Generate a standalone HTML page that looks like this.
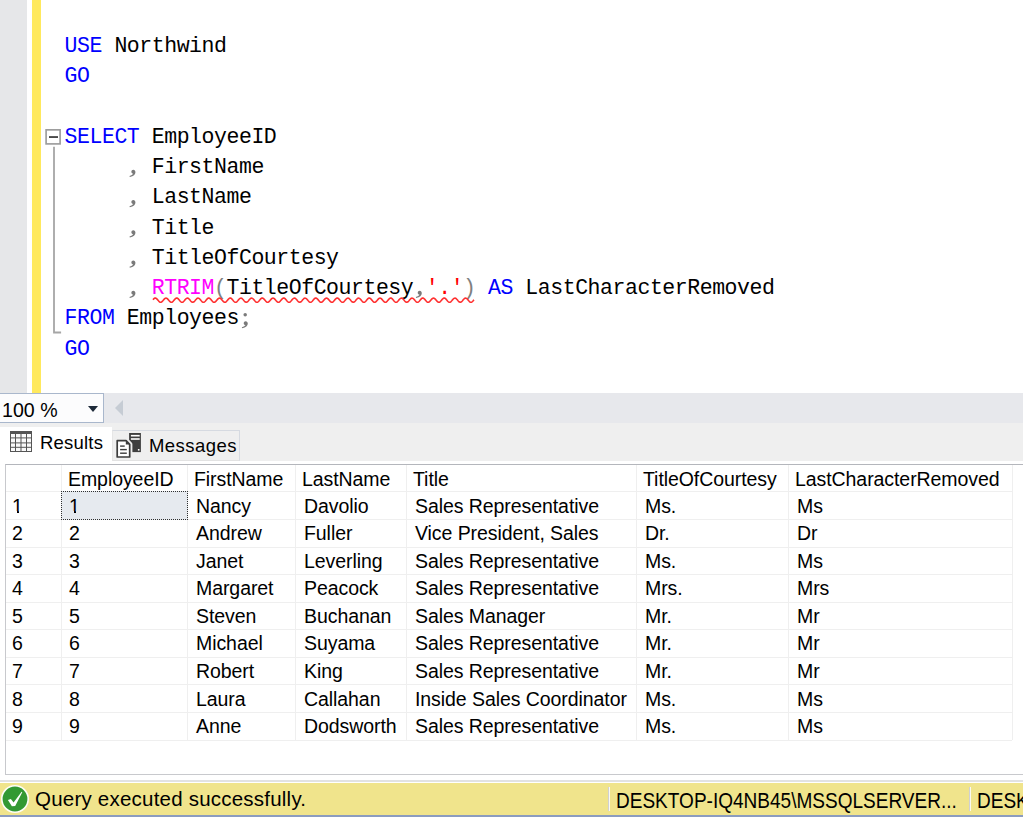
<!DOCTYPE html>
<html><head><meta charset="utf-8">
<style>
*{margin:0;padding:0;box-sizing:border-box}
html,body{width:1023px;height:817px;overflow:hidden;background:#f0f0f0;position:relative}
.abs{position:absolute}
.code{position:absolute;left:64.6px;font-family:"Liberation Mono",monospace;font-size:21.5px;letter-spacing:-0.45px;white-space:pre;color:#000;line-height:30.27px}
.kw{color:#0000ff}.gr{color:#808080}.cm{color:transparent}.fn{color:#ff00ff}.st{color:#ff0000}
.ui{position:absolute;font-family:"Liberation Sans",sans-serif;white-space:pre;color:#000}
.gl{position:absolute;background:#efefef}
.cell{position:absolute;font-family:"Liberation Sans",sans-serif;font-size:19.5px;letter-spacing:-0.07px;white-space:pre;color:#000;line-height:20px}
</style></head><body>
<div class="abs" style="left:0;top:0;width:1023px;height:393px;background:#fff"></div>
<div class="abs" style="left:0;top:0;width:27px;height:393px;background:#e6e7e9"></div>
<div class="abs" style="left:32px;top:0;width:9px;height:393px;background:#ffe95d"></div>
<div class="code" style="top:31.0px"><span class="kw">USE</span> Northwind
<span class="kw">GO</span>

<span class="kw">SELECT</span> EmployeeID
     <span class="cm">,</span> FirstName
     <span class="cm">,</span> LastName
     <span class="cm">,</span> Title
     <span class="cm">,</span> TitleOfCourtesy
     <span class="cm">,</span> <span class="fn">RTRIM</span><span class="gr">(</span>TitleOfCourtesy<span class="cm">,</span><span class="st">'.'</span><span class="gr">)</span> <span class="kw">AS</span> LastCharacterRemoved
<span class="kw">FROM</span> Employees<span class="cm">;</span>
<span class="kw">GO</span></div>
<svg class="abs" style="left:40px;top:120px" width="30" height="220" viewBox="40 120 30 220"><rect x="46.1" y="129.85" width="14" height="14.05" fill="#fff" stroke="#9c9c9c" stroke-width="1.65"/><rect x="49" y="136.1" width="9" height="1.9" fill="#4a4a4a"/><path d="M54 146.8 V332.5 H61.1" fill="none" stroke="#a6a6a6" stroke-width="1.8"/></svg>
<svg class="abs" style="left:150px;top:294px" width="330" height="12" viewBox="0 0 330 12"><polyline points="3.0,5.74 3.5,5.17 4.0,4.68 4.5,4.33 5.0,4.13 5.5,4.11 6.0,4.27 6.5,4.60 7.0,5.06 7.5,5.62 8.0,6.23 8.5,6.84 9.0,7.39 9.5,7.84 10.0,8.15 10.5,8.29 11.0,8.26 11.5,8.04 12.0,7.67 12.5,7.18 13.0,6.60 13.5,5.98 14.0,5.39 14.5,4.86 15.0,4.45 15.5,4.19 16.0,4.10 16.5,4.19 17.0,4.45 17.5,4.86 18.0,5.39 18.5,5.98 19.0,6.60 19.5,7.18 20.0,7.67 20.5,8.04 21.0,8.26 21.5,8.29 22.0,8.15 22.5,7.84 23.0,7.39 23.5,6.84 24.0,6.23 24.5,5.62 25.0,5.06 25.5,4.60 26.0,4.27 26.5,4.11 27.0,4.13 27.5,4.33 28.0,4.68 28.5,5.17 29.0,5.74 29.5,6.35 30.0,6.95 30.5,7.49 31.0,7.91 31.5,8.19 32.0,8.30 32.5,8.23 33.0,7.98 33.5,7.58 34.0,7.07 34.5,6.48 35.0,5.86 35.5,5.28 36.0,4.77 36.5,4.39 37.0,4.16 37.5,4.10 38.0,4.23 38.5,4.52 39.0,4.96 39.5,5.50 40.0,6.11 40.5,6.72 41.0,7.29 41.5,7.76 42.0,8.10 42.5,8.28 43.0,8.28 43.5,8.10 44.0,7.76 44.5,7.29 45.0,6.72 45.5,6.11 46.0,5.50 46.5,4.96 47.0,4.52 47.5,4.23 48.0,4.10 48.5,4.16 49.0,4.39 49.5,4.77 50.0,5.28 50.5,5.86 51.0,6.48 51.5,7.07 52.0,7.58 52.5,7.98 53.0,8.23 53.5,8.30 54.0,8.19 54.5,7.91 55.0,7.49 55.5,6.95 56.0,6.35 56.5,5.74 57.0,5.17 57.5,4.68 58.0,4.33 58.5,4.13 59.0,4.11 59.5,4.27 60.0,4.60 60.5,5.06 61.0,5.62 61.5,6.23 62.0,6.84 62.5,7.39 63.0,7.84 63.5,8.15 64.0,8.29 64.5,8.26 65.0,8.04 65.5,7.67 66.0,7.18 66.5,6.60 67.0,5.98 67.5,5.39 68.0,4.86 68.5,4.45 69.0,4.19 69.5,4.10 70.0,4.19 70.5,4.45 71.0,4.86 71.5,5.39 72.0,5.98 72.5,6.60 73.0,7.18 73.5,7.67 74.0,8.04 74.5,8.26 75.0,8.29 75.5,8.15 76.0,7.84 76.5,7.39 77.0,6.84 77.5,6.23 78.0,5.62 78.5,5.06 79.0,4.60 79.5,4.27 80.0,4.11 80.5,4.13 81.0,4.33 81.5,4.68 82.0,5.17 82.5,5.74 83.0,6.35 83.5,6.95 84.0,7.49 84.5,7.91 85.0,8.19 85.5,8.30 86.0,8.23 86.5,7.98 87.0,7.58 87.5,7.07 88.0,6.48 88.5,5.86 89.0,5.28 89.5,4.77 90.0,4.39 90.5,4.16 91.0,4.10 91.5,4.23 92.0,4.52 92.5,4.96 93.0,5.50 93.5,6.11 94.0,6.72 94.5,7.29 95.0,7.76 95.5,8.10 96.0,8.28 96.5,8.28 97.0,8.10 97.5,7.76 98.0,7.29 98.5,6.72 99.0,6.11 99.5,5.50 100.0,4.96 100.5,4.52 101.0,4.23 101.5,4.10 102.0,4.16 102.5,4.39 103.0,4.77 103.5,5.28 104.0,5.86 104.5,6.48 105.0,7.07 105.5,7.58 106.0,7.98 106.5,8.23 107.0,8.30 107.5,8.19 108.0,7.91 108.5,7.49 109.0,6.95 109.5,6.35 110.0,5.74 110.5,5.17 111.0,4.68 111.5,4.33 112.0,4.13 112.5,4.11 113.0,4.27 113.5,4.60 114.0,5.06 114.5,5.62 115.0,6.23 115.5,6.84 116.0,7.39 116.5,7.84 117.0,8.15 117.5,8.29 118.0,8.26 118.5,8.04 119.0,7.67 119.5,7.18 120.0,6.60 120.5,5.98 121.0,5.39 121.5,4.86 122.0,4.45 122.5,4.19 123.0,4.10 123.5,4.19 124.0,4.45 124.5,4.86 125.0,5.39 125.5,5.98 126.0,6.60 126.5,7.18 127.0,7.67 127.5,8.04 128.0,8.26 128.5,8.29 129.0,8.15 129.5,7.84 130.0,7.39 130.5,6.84 131.0,6.23 131.5,5.62 132.0,5.06 132.5,4.60 133.0,4.27 133.5,4.11 134.0,4.13 134.5,4.33 135.0,4.68 135.5,5.17 136.0,5.74 136.5,6.35 137.0,6.95 137.5,7.49 138.0,7.91 138.5,8.19 139.0,8.30 139.5,8.23 140.0,7.98 140.5,7.58 141.0,7.07 141.5,6.48 142.0,5.86 142.5,5.28 143.0,4.77 143.5,4.39 144.0,4.16 144.5,4.10 145.0,4.23 145.5,4.52 146.0,4.96 146.5,5.50 147.0,6.11 147.5,6.72 148.0,7.29 148.5,7.76 149.0,8.10 149.5,8.28 150.0,8.28 150.5,8.10 151.0,7.76 151.5,7.29 152.0,6.72 152.5,6.11 153.0,5.50 153.5,4.96 154.0,4.52 154.5,4.23 155.0,4.10 155.5,4.16 156.0,4.39 156.5,4.77 157.0,5.28 157.5,5.86 158.0,6.48 158.5,7.07 159.0,7.58 159.5,7.98 160.0,8.23 160.5,8.30 161.0,8.19 161.5,7.91 162.0,7.49 162.5,6.95 163.0,6.35 163.5,5.74 164.0,5.17 164.5,4.68 165.0,4.33 165.5,4.13 166.0,4.11 166.5,4.27 167.0,4.60 167.5,5.06 168.0,5.62 168.5,6.23 169.0,6.84 169.5,7.39 170.0,7.84 170.5,8.15 171.0,8.29 171.5,8.26 172.0,8.04 172.5,7.67 173.0,7.18 173.5,6.60 174.0,5.98 174.5,5.39 175.0,4.86 175.5,4.45 176.0,4.19 176.5,4.10 177.0,4.19 177.5,4.45 178.0,4.86 178.5,5.39 179.0,5.98 179.5,6.60 180.0,7.18 180.5,7.67 181.0,8.04 181.5,8.26 182.0,8.29 182.5,8.15 183.0,7.84 183.5,7.39 184.0,6.84 184.5,6.23 185.0,5.62 185.5,5.06 186.0,4.60 186.5,4.27 187.0,4.11 187.5,4.13 188.0,4.33 188.5,4.68 189.0,5.17 189.5,5.74 190.0,6.35 190.5,6.95 191.0,7.49 191.5,7.91 192.0,8.19 192.5,8.30 193.0,8.23 193.5,7.98 194.0,7.58 194.5,7.07 195.0,6.48 195.5,5.86 196.0,5.28 196.5,4.77 197.0,4.39 197.5,4.16 198.0,4.10 198.5,4.23 199.0,4.52 199.5,4.96 200.0,5.50 200.5,6.11 201.0,6.72 201.5,7.29 202.0,7.76 202.5,8.10 203.0,8.28 203.5,8.28 204.0,8.10 204.5,7.76 205.0,7.29 205.5,6.72 206.0,6.11 206.5,5.50 207.0,4.96 207.5,4.52 208.0,4.23 208.5,4.10 209.0,4.16 209.5,4.39 210.0,4.77 210.5,5.28 211.0,5.86 211.5,6.48 212.0,7.07 212.5,7.58 213.0,7.98 213.5,8.23 214.0,8.30 214.5,8.19 215.0,7.91 215.5,7.49 216.0,6.95 216.5,6.35 217.0,5.74 217.5,5.17 218.0,4.68 218.5,4.33 219.0,4.13 219.5,4.11 220.0,4.27 220.5,4.60 221.0,5.06 221.5,5.62 222.0,6.23 222.5,6.84 223.0,7.39 223.5,7.84 224.0,8.15 224.5,8.29 225.0,8.26 225.5,8.04 226.0,7.67 226.5,7.18 227.0,6.60 227.5,5.98 228.0,5.39 228.5,4.86 229.0,4.45 229.5,4.19 230.0,4.10 230.5,4.19 231.0,4.45 231.5,4.86 232.0,5.39 232.5,5.98 233.0,6.60 233.5,7.18 234.0,7.67 234.5,8.04 235.0,8.26 235.5,8.29 236.0,8.15 236.5,7.84 237.0,7.39 237.5,6.84 238.0,6.23 238.5,5.62 239.0,5.06 239.5,4.60 240.0,4.27 240.5,4.11 241.0,4.13 241.5,4.33 242.0,4.68 242.5,5.17 243.0,5.74 243.5,6.35 244.0,6.95 244.5,7.49 245.0,7.91 245.5,8.19 246.0,8.30 246.5,8.23 247.0,7.98 247.5,7.58 248.0,7.07 248.5,6.48 249.0,5.86 249.5,5.28 250.0,4.77 250.5,4.39 251.0,4.16 251.5,4.10 252.0,4.23 252.5,4.52 253.0,4.96 253.5,5.50 254.0,6.11 254.5,6.72 255.0,7.29 255.5,7.76 256.0,8.10 256.5,8.28 257.0,8.28 257.5,8.10 258.0,7.76 258.5,7.29 259.0,6.72 259.5,6.11 260.0,5.50 260.5,4.96 261.0,4.52 261.5,4.23 262.0,4.10 262.5,4.16 263.0,4.39 263.5,4.77 264.0,5.28 264.5,5.86 265.0,6.48 265.5,7.07 266.0,7.58 266.5,7.98 267.0,8.23 267.5,8.30 268.0,8.19 268.5,7.91 269.0,7.49 269.5,6.95 270.0,6.35 270.5,5.74 271.0,5.17 271.5,4.68 272.0,4.33 272.5,4.13 273.0,4.11 273.5,4.27 274.0,4.60 274.5,5.06 275.0,5.62 275.5,6.23 276.0,6.84 276.5,7.39 277.0,7.84 277.5,8.15 278.0,8.29 278.5,8.26 279.0,8.04 279.5,7.67 280.0,7.18 280.5,6.60 281.0,5.98 281.5,5.39 282.0,4.86 282.5,4.45 283.0,4.19 283.5,4.10 284.0,4.19 284.5,4.45 285.0,4.86 285.5,5.39 286.0,5.98 286.5,6.60 287.0,7.18 287.5,7.67 288.0,8.04 288.5,8.26 289.0,8.29 289.5,8.15 290.0,7.84 290.5,7.39 291.0,6.84 291.5,6.23 292.0,5.62 292.5,5.06 293.0,4.60 293.5,4.27 294.0,4.11 294.5,4.13 295.0,4.33 295.5,4.68 296.0,5.17 296.5,5.74 297.0,6.35 297.5,6.95 298.0,7.49 298.5,7.91 299.0,8.19 299.5,8.30 300.0,8.23 300.5,7.98 301.0,7.58 301.5,7.07 302.0,6.48 302.5,5.86 303.0,5.28 303.5,4.77 304.0,4.39 304.5,4.16 305.0,4.10 305.5,4.23 306.0,4.52 306.5,4.96 307.0,5.50 307.5,6.11 308.0,6.72 308.5,7.29 309.0,7.76 309.5,8.10 310.0,8.28 310.5,8.28 311.0,8.10 311.5,7.76 312.0,7.29 312.5,6.72 313.0,6.11 313.5,5.50 314.0,4.96 314.5,4.52 315.0,4.23 315.5,4.10 316.0,4.16 316.5,4.39 317.0,4.77 317.5,5.28 318.0,5.86 318.5,6.48 319.0,7.07 319.5,7.58 320.0,7.98 320.5,8.23 321.0,8.30 321.5,8.19 322.0,7.91 322.5,7.49 323.0,6.95 323.5,6.35 324.0,5.74" fill="none" stroke="#ff3030" stroke-width="1.6"/></svg>
<svg class="abs" style="left:0;top:0" width="1023" height="393"><g fill="#7a7a7a"><path transform="translate(129.05 169.78)" d="M4.3 0 C5.5 0 6.4 0.9 6.4 2.4 C6.4 4.7 4.5 6.5 0.8 7.2 L0.4 6.1 C2.4 5.6 3.7 4.7 4.1 3.9 C3 3.8 2.3 3 2.3 2 C2.3 0.9 3.2 0 4.3 0 Z"/><path transform="translate(129.05 200.05)" d="M4.3 0 C5.5 0 6.4 0.9 6.4 2.4 C6.4 4.7 4.5 6.5 0.8 7.2 L0.4 6.1 C2.4 5.6 3.7 4.7 4.1 3.9 C3 3.8 2.3 3 2.3 2 C2.3 0.9 3.2 0 4.3 0 Z"/><path transform="translate(129.05 230.32)" d="M4.3 0 C5.5 0 6.4 0.9 6.4 2.4 C6.4 4.7 4.5 6.5 0.8 7.2 L0.4 6.1 C2.4 5.6 3.7 4.7 4.1 3.9 C3 3.8 2.3 3 2.3 2 C2.3 0.9 3.2 0 4.3 0 Z"/><path transform="translate(129.05 260.59)" d="M4.3 0 C5.5 0 6.4 0.9 6.4 2.4 C6.4 4.7 4.5 6.5 0.8 7.2 L0.4 6.1 C2.4 5.6 3.7 4.7 4.1 3.9 C3 3.8 2.3 3 2.3 2 C2.3 0.9 3.2 0 4.3 0 Z"/><path transform="translate(129.05 290.86)" d="M4.3 0 C5.5 0 6.4 0.9 6.4 2.4 C6.4 4.7 4.5 6.5 0.8 7.2 L0.4 6.1 C2.4 5.6 3.7 4.7 4.1 3.9 C3 3.8 2.3 3 2.3 2 C2.3 0.9 3.2 0 4.3 0 Z"/><path transform="translate(415.40 290.86)" d="M4.3 0 C5.5 0 6.4 0.9 6.4 2.4 C6.4 4.7 4.5 6.5 0.8 7.2 L0.4 6.1 C2.4 5.6 3.7 4.7 4.1 3.9 C3 3.8 2.3 3 2.3 2 C2.3 0.9 3.2 0 4.3 0 Z"/><path transform="translate(241.40 321.13)" d="M4.3 0 C5.5 0 6.4 0.9 6.4 2.4 C6.4 4.7 4.5 6.5 0.8 7.2 L0.4 6.1 C2.4 5.6 3.7 4.7 4.1 3.9 C3 3.8 2.3 3 2.3 2 C2.3 0.9 3.2 0 4.3 0 Z"/><circle cx="245.20" cy="314.63" r="1.75"/></g></svg>
<div class="abs" style="left:0;top:393px;width:1023px;height:30px;background:#e7e8ec"></div>
<div class="abs" style="left:-2px;top:393px;width:106px;height:30px;background:#fcfcfd;border:1px solid #a9b7cc"></div>
<div class="ui" style="left:2px;top:398.5px;font-size:19.6px;line-height:22px">100 %</div>
<svg class="abs" style="left:86px;top:404px" width="14" height="10"><polygon points="2,2 12,2 7,8" fill="#1e2a3a"/></svg>
<svg class="abs" style="left:112px;top:398px" width="14" height="20"><polygon points="11,2 11,18 3,10" fill="#c6ccd4"/></svg>
<div class="abs" style="left:0;top:423px;width:1023px;height:360px;background:#fff"></div>
<div class="abs" style="left:0;top:423px;width:1023px;height:38px;background:#efefef"></div>
<div class="abs" style="left:0;top:780px;width:1023px;height:2px;background:#e2e2e2"></div>
<div class="abs" style="left:0;top:427px;width:112px;height:38px;background:#fff"></div>
<div class="abs" style="left:112px;top:430px;width:128px;height:31px;background:#efefef;border:1px solid #d6dae1;border-left-color:#e6e6e6;border-bottom:1px solid #e2e2e2"></div>
<svg class="abs" style="left:10px;top:431px" width="22" height="21" viewBox="0 0 22 21"><rect x="0" y="0" width="22" height="21" fill="#555"/><g fill="#fafafa"><rect x="1" y="3" width="4.0" height="3.4"/><rect x="1" y="7.4" width="4.0" height="4.0"/><rect x="1" y="12.4" width="4.0" height="3.4"/><rect x="1" y="16.8" width="4.0" height="3.2"/><rect x="6" y="3" width="4.5" height="3.4"/><rect x="6" y="7.4" width="4.5" height="4.0"/><rect x="6" y="12.4" width="4.5" height="3.4"/><rect x="6" y="16.8" width="4.5" height="3.2"/><rect x="11.5" y="3" width="4.5" height="3.4"/><rect x="11.5" y="7.4" width="4.5" height="4.0"/><rect x="11.5" y="12.4" width="4.5" height="3.4"/><rect x="11.5" y="16.8" width="4.5" height="3.2"/><rect x="17" y="3" width="4.0" height="3.4"/><rect x="17" y="7.4" width="4.0" height="4.0"/><rect x="17" y="12.4" width="4.0" height="3.4"/><rect x="17" y="16.8" width="4.0" height="3.2"/></g></svg>
<div class="ui" style="left:40px;top:432.5px;font-size:18.5px;letter-spacing:0.2px;line-height:20px">Results</div>
<svg class="abs" style="left:112px;top:428px" width="34" height="34" viewBox="0 0 34 34">
<rect x="17.1" y="5" width="11.8" height="19.1" fill="#3f3f3f"/>
<rect x="18.9" y="6.9" width="8.8" height="1.6" fill="#fff"/><rect x="18.9" y="10.2" width="8.8" height="1.6" fill="#fff"/>
<rect x="25.9" y="21" width="1.6" height="1.6" fill="#fff"/>
<path d="M5.2 12.7 H14.1 L17.7 16.3 V29 H5.2 Z" fill="#efefef" stroke="#efefef" stroke-width="5.4" stroke-linejoin="round"/>
<path d="M5.2 12.7 H14.1 L17.7 16.3 V29 H5.2 Z" fill="#fff" stroke="#3c3c3c" stroke-width="1.7" stroke-linejoin="round"/>
<path d="M13.8 12.7 L17.7 16.6 H13.8 Z" fill="#3c3c3c"/>
<rect x="8.1" y="17.4" width="4.6" height="1.4" fill="#3c3c3c"/><rect x="8.1" y="20.9" width="6.7" height="1.4" fill="#3c3c3c"/><rect x="8.1" y="24.5" width="6.7" height="1.4" fill="#3c3c3c"/>
</svg>
<div class="ui" style="left:149px;top:435.5px;font-size:18.5px;letter-spacing:0.45px;line-height:20px">Messages</div>
<div class="abs" style="left:5px;top:464px;width:1030px;height:311px;background:#fff;border:1px solid #c8c9cd;border-top-color:#b4b6bc;border-right:none"></div>
<div class="gl" style="left:6px;top:491px;width:1006px;height:1px"></div>
<div class="gl" style="left:6px;top:519.06px;width:1006px;height:1px"></div>
<div class="gl" style="left:6px;top:546.62px;width:1006px;height:1px"></div>
<div class="gl" style="left:6px;top:574.18px;width:1006px;height:1px"></div>
<div class="gl" style="left:6px;top:601.74px;width:1006px;height:1px"></div>
<div class="gl" style="left:6px;top:629.30px;width:1006px;height:1px"></div>
<div class="gl" style="left:6px;top:656.86px;width:1006px;height:1px"></div>
<div class="gl" style="left:6px;top:684.42px;width:1006px;height:1px"></div>
<div class="gl" style="left:6px;top:711.98px;width:1006px;height:1px"></div>
<div class="gl" style="left:6px;top:739.54px;width:1006px;height:1px"></div>
<div class="gl" style="left:61px;top:465px;width:1px;height:275px"></div>
<div class="gl" style="left:187px;top:465px;width:1px;height:275px"></div>
<div class="gl" style="left:295px;top:465px;width:1px;height:275px"></div>
<div class="gl" style="left:406px;top:465px;width:1px;height:275px"></div>
<div class="gl" style="left:636px;top:465px;width:1px;height:275px"></div>
<div class="gl" style="left:788px;top:465px;width:1px;height:275px"></div>
<div class="gl" style="left:1012px;top:465px;width:1px;height:275px"></div>
<div class="abs" style="left:61px;top:491px;width:127px;height:29px;background:#e6eaef;border:1px dotted #303030"></div>
<div class="cell" style="left:68px;top:469px">EmployeeID</div>
<div class="cell" style="left:194px;top:469px">FirstName</div>
<div class="cell" style="left:302px;top:469px">LastName</div>
<div class="cell" style="left:413px;top:469px">Title</div>
<div class="cell" style="left:643px;top:469px">TitleOfCourtesy</div>
<div class="cell" style="left:795px;top:469px">LastCharacterRemoved</div>
<div class="cell" style="left:12px;top:495.60px">1</div>
<div class="cell" style="left:69px;top:495.60px">1</div>
<div class="cell" style="left:196px;top:495.60px">Nancy</div>
<div class="cell" style="left:304px;top:495.60px">Davolio</div>
<div class="cell" style="left:415px;top:495.60px">Sales Representative</div>
<div class="cell" style="left:645px;top:495.60px">Ms.</div>
<div class="cell" style="left:797px;top:495.60px">Ms</div>
<div class="cell" style="left:12px;top:523.16px">2</div>
<div class="cell" style="left:69px;top:523.16px">2</div>
<div class="cell" style="left:196px;top:523.16px">Andrew</div>
<div class="cell" style="left:304px;top:523.16px">Fuller</div>
<div class="cell" style="left:415px;top:523.16px">Vice President, Sales</div>
<div class="cell" style="left:645px;top:523.16px">Dr.</div>
<div class="cell" style="left:797px;top:523.16px">Dr</div>
<div class="cell" style="left:12px;top:550.72px">3</div>
<div class="cell" style="left:69px;top:550.72px">3</div>
<div class="cell" style="left:196px;top:550.72px">Janet</div>
<div class="cell" style="left:304px;top:550.72px">Leverling</div>
<div class="cell" style="left:415px;top:550.72px">Sales Representative</div>
<div class="cell" style="left:645px;top:550.72px">Ms.</div>
<div class="cell" style="left:797px;top:550.72px">Ms</div>
<div class="cell" style="left:12px;top:578.28px">4</div>
<div class="cell" style="left:69px;top:578.28px">4</div>
<div class="cell" style="left:196px;top:578.28px">Margaret</div>
<div class="cell" style="left:304px;top:578.28px">Peacock</div>
<div class="cell" style="left:415px;top:578.28px">Sales Representative</div>
<div class="cell" style="left:645px;top:578.28px">Mrs.</div>
<div class="cell" style="left:797px;top:578.28px">Mrs</div>
<div class="cell" style="left:12px;top:605.84px">5</div>
<div class="cell" style="left:69px;top:605.84px">5</div>
<div class="cell" style="left:196px;top:605.84px">Steven</div>
<div class="cell" style="left:304px;top:605.84px">Buchanan</div>
<div class="cell" style="left:415px;top:605.84px">Sales Manager</div>
<div class="cell" style="left:645px;top:605.84px">Mr.</div>
<div class="cell" style="left:797px;top:605.84px">Mr</div>
<div class="cell" style="left:12px;top:633.40px">6</div>
<div class="cell" style="left:69px;top:633.40px">6</div>
<div class="cell" style="left:196px;top:633.40px">Michael</div>
<div class="cell" style="left:304px;top:633.40px">Suyama</div>
<div class="cell" style="left:415px;top:633.40px">Sales Representative</div>
<div class="cell" style="left:645px;top:633.40px">Mr.</div>
<div class="cell" style="left:797px;top:633.40px">Mr</div>
<div class="cell" style="left:12px;top:660.96px">7</div>
<div class="cell" style="left:69px;top:660.96px">7</div>
<div class="cell" style="left:196px;top:660.96px">Robert</div>
<div class="cell" style="left:304px;top:660.96px">King</div>
<div class="cell" style="left:415px;top:660.96px">Sales Representative</div>
<div class="cell" style="left:645px;top:660.96px">Mr.</div>
<div class="cell" style="left:797px;top:660.96px">Mr</div>
<div class="cell" style="left:12px;top:688.52px">8</div>
<div class="cell" style="left:69px;top:688.52px">8</div>
<div class="cell" style="left:196px;top:688.52px">Laura</div>
<div class="cell" style="left:304px;top:688.52px">Callahan</div>
<div class="cell" style="left:415px;top:688.52px">Inside Sales Coordinator</div>
<div class="cell" style="left:645px;top:688.52px">Ms.</div>
<div class="cell" style="left:797px;top:688.52px">Ms</div>
<div class="cell" style="left:12px;top:716.08px">9</div>
<div class="cell" style="left:69px;top:716.08px">9</div>
<div class="cell" style="left:196px;top:716.08px">Anne</div>
<div class="cell" style="left:304px;top:716.08px">Dodsworth</div>
<div class="cell" style="left:415px;top:716.08px">Sales Representative</div>
<div class="cell" style="left:645px;top:716.08px">Ms.</div>
<div class="cell" style="left:797px;top:716.08px">Ms</div>
<div class="abs" style="left:13px;top:511px;width:4px;height:2px;background:#fff"></div>
<div class="abs" style="left:19px;top:510.5px;width:5px;height:2px;background:#fff"></div>
<div class="abs" style="left:70px;top:511px;width:4px;height:2px;background:#e6eaef"></div>
<div class="abs" style="left:76px;top:510.5px;width:5px;height:2px;background:#e6eaef"></div>
<div class="abs" style="left:0;top:783px;width:1023px;height:34px;background:#f0e48c"></div>
<div class="abs" style="left:0;top:815px;width:1023px;height:2px;background:#8b9cbf"></div>
<svg class="abs" style="left:1px;top:785px" width="29" height="29" viewBox="0 0 29 29">
<circle cx="14" cy="14" r="13.2" fill="#339933" stroke="#fdfdf8" stroke-width="1.6"/>
<polygon points="6.93,14.93 9.87,13.94 12.59,17.42 20.65,6.87 21.29,7.32 14.18,20.91 10.87,21.36" fill="#fff"/>
</svg>
<div class="ui" style="left:35px;top:788px;font-size:20.5px;letter-spacing:0.22px;line-height:22px">Query executed successfully.</div>
<div class="abs" style="left:608px;top:787px;width:2px;height:24px;background:linear-gradient(90deg,#cfd0d3 50%,#fbfaf0 50%)"></div>
<div class="ui" style="left:616px;top:789.6px;font-size:21.5px;line-height:22px;transform:scaleX(0.885);transform-origin:0 0">DESKTOP-IQ4NB45\MSSQLSERVER...</div>
<div class="abs" style="left:969px;top:787px;width:2px;height:24px;background:linear-gradient(90deg,#cfd0d3 50%,#fbfaf0 50%)"></div>
<div class="ui" style="left:977px;top:789.6px;font-size:21.5px;line-height:22px;transform:scaleX(0.885);transform-origin:0 0">DESKTOP</div>
</body></html>
